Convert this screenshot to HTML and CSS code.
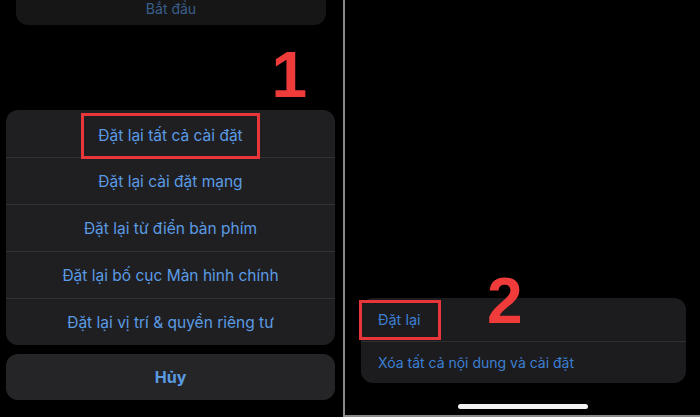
FILE: index.html
```html
<!DOCTYPE html>
<html lang="vi">
<head>
<meta charset="utf-8">
<link rel="stylesheet" href="styles.css">
</head>
<body>
<div class="screen">
  <section class="panel panel-left">
    <div class="top-card"><span>Bắt đầu</span></div>
    <div class="step-row"><span class="step step-one">1</span></div>
    <div class="sheet">
      <div class="sheet-row"><span class="highlight">Đặt lại tất cả cài đặt</span></div>
      <div class="sheet-row">Đặt lại cài đặt mạng</div>
      <div class="sheet-row">Đặt lại từ điển bàn phím</div>
      <div class="sheet-row">Đặt lại bố cục Màn hình chính</div>
      <div class="sheet-row">Đặt lại vị trí &amp; quyền riêng tư</div>
    </div>
    <div class="cancel">Hủy</div>
  </section>
  <div class="divider"></div>
  <section class="panel panel-right">
    <div class="list-card">
      <span class="step step-two">2</span>
      <span class="highlight-box"></span>
      <div class="list-row">Đặt lại</div>
      <div class="list-row">Xóa tất cả nội dung và cài đặt</div>
    </div>
    <div class="home-bar"><span class="home-indicator"></span></div>
  </section>
</div>
</body>
</html>
```
FILE: styles.css
```css
* { box-sizing: border-box; }
html, body {
  margin: 0;
  padding: 0;
  background: #000;
  width: 700px;
  height: 417px;
  overflow: hidden;
  font-family: "Inter", "Liberation Sans", Arial, sans-serif;
}
.screen {
  display: flex;
  width: 700px;
  height: 417px;
}
.panel-left {
  width: 343px;
  display: flex;
  flex-direction: column;
}
.top-card {
  margin: -8px 17px 0 16px;
  height: 33px;
  background: #161617;
  border-radius: 0 0 12px 12px;
  display: flex;
  align-items: center;
  justify-content: center;
  color: #3a5f8c;
  font-size: 14px;
  line-height: 16px;
}
.step-row {
  height: 85px;
  display: flex;
  justify-content: flex-end;
  align-items: flex-end;
  padding-right: 36px;
  padding-bottom: 3px;
}
.step {
  color: #f03b3b;
  font-family: "Liberation Sans", Arial, sans-serif;
  font-weight: 700;
  font-size: 64px;
  line-height: 1;
}
.sheet {
  margin: 0 8px 0 6px;
  background: #1f1f21;
  border-radius: 12px;
}
.sheet-row {
  height: 47px;
  display: flex;
  align-items: center;
  justify-content: center;
  color: #5b9be4;
  font-size: 15.5px;
  border-top: 1px solid #323234;
}
.sheet-row:first-child { border-top: none; }
.highlight {
  display: inline-flex;
  align-items: center;
  height: 46px;
  padding: 0 14px;
  border: 3px solid #e8363a;
  position: relative;
  top: 2px;
}
.cancel {
  margin: 9px 8px 0 6px;
  height: 46px;
  border-radius: 12px;
  background: #252527;
  color: #5b9be4;
  font-weight: 700;
  font-size: 16px;
  display: flex;
  align-items: center;
  justify-content: center;
}
.divider {
  width: 2px;
  background: #8a8a8a;
}
.panel-right {
  flex: 1;
  display: flex;
  flex-direction: column;
  justify-content: flex-end;
  border-bottom: 2px solid #8a8a8a;
}
.list-card {
  position: relative;
  margin: 0 14px 0 16px;
  background: #1c1c1e;
  border-radius: 12px;
}
.list-row {
  height: 42px;
  display: flex;
  align-items: center;
  padding-left: 17px;
  color: #3c7fd2;
  font-size: 14px;
  border-top: 1px solid #2e2e30;
}
.list-row:nth-child(3) { border-top: none; height: 43px; font-size: 14.5px; }
.step-two {
  position: absolute;
  left: 126px;
  top: -29px;
}
.highlight-box {
  position: absolute;
  left: -2px;
  top: 2px;
  width: 82px;
  height: 40px;
  border: 3px solid #e8363a;
}
.home-bar {
  height: 32px;
  display: flex;
  justify-content: center;
  align-items: center;
  padding-top: 15px;
}
.home-indicator {
  width: 130px;
  height: 5px;
  border-radius: 3px;
  background: #f2f2f2;
}
```
